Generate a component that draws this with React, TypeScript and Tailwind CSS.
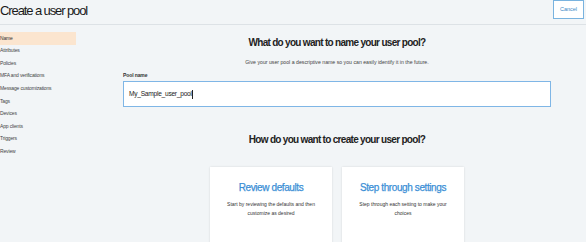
import React from 'react'

const steps = [
    'Name',
    'Attributes',
    'Policies',
    'MFA and verifications',
    'Message customizations',
    'Tags',
    'Devices',
    'App clients',
    'Triggers',
    'Review',
]

const App = () => {
    return (
        <div className="w-[586px] h-[242px] overflow-hidden bg-[#f2f5f7] text-[#222] font-['Liberation_Sans',Arial,sans-serif]">
            {/* Header */}
            <div className="h-[25px] flex items-start justify-between border-b border-[#dde2e6]">
                <h1 className="text-[13px] leading-[14px] pt-[4px] tracking-[-1.1px] text-[#1a1a1a]">Create a user pool</h1>
                <button className="w-[31px] h-[19px] mr-[2px] bg-white border border-[#79b3df] text-[5.5px] text-[#3b86c4] flex items-center justify-center">
                    Cancel
                </button>
            </div>

            <div className="flex">
                {/* Sidebar */}
                <div className="w-[88px] pt-[7px] shrink-0">
                    {steps.map((s, i) => (
                        <div
                            key={s}
                            className={
                                i === 0
                                    ? 'w-[76px] h-[12.6px] flex items-center text-[5px] tracking-[-0.15px] text-[#333] bg-[#fbe5cf]'
                                    : 'w-[76px] h-[12.6px] flex items-center text-[5px] tracking-[-0.15px] text-[#444]'
                            }
                        >
                            {s}
                        </div>
                    ))}
                </div>

                {/* Main */}
                <div className="flex-1 flex flex-col items-center">
                    <h2 className="mt-[12px] text-[10px] leading-[12px] font-bold tracking-[-0.7px] text-[#222]">
                        What do you want to name your user pool?
                    </h2>
                    <p className="mt-[10px] text-[5.2px] leading-[6px] text-[#444]">
                        Give your user pool a descriptive name so you can easily identify it in the future.
                    </p>
                    <div className="w-[428px] mt-[7px] flex flex-col">
                        <label className="text-[5px] leading-[6px] font-bold tracking-[-0.1px] text-[#333]">Pool name</label>
                        <div className="mt-[3px] h-[26px] bg-white border-[1.5px] border-[#7fb6e6] flex items-center pl-[5px] text-[6.6px] tracking-[-0.25px] text-[#222]">
                            My_Sample_user_pool<span className="inline-block w-[0.6px] h-[9px] bg-[#222]" />
                        </div>
                    </div>
                    <h2 className="mt-[27px] text-[10px] leading-[12px] font-bold tracking-[-0.7px] text-[#222]">
                        How do you want to create your user pool?
                    </h2>
                    <div className="mt-[21px] flex gap-[10px]">
                        <div className="w-[122px] h-[80px] bg-white shadow-[0_0_2px_rgba(0,0,0,0.12)] flex flex-col items-center pt-[15px] px-[10px]">
                            <div className="text-[10px] leading-[12px] tracking-[-0.4px] text-[#3b8fd6] [-webkit-text-stroke:0.25px_#3b8fd6]">Review defaults</div>
                            <p className="mt-[6px] text-[5px] leading-[9px] text-center text-[#333]">
                                Start by reviewing the defaults and then customize as desired
                            </p>
                        </div>
                        <div className="w-[122px] h-[80px] bg-white shadow-[0_0_2px_rgba(0,0,0,0.12)] flex flex-col items-center pt-[15px] px-[10px]">
                            <div className="text-[10px] leading-[12px] tracking-[-0.4px] text-[#3b8fd6] [-webkit-text-stroke:0.25px_#3b8fd6]">Step through settings</div>
                            <p className="mt-[6px] text-[5px] leading-[9px] text-center text-[#333]">
                                Step through each setting to make your choices
                            </p>
                        </div>
                    </div>
                </div>
            </div>
        </div>
    )
}

export default App
